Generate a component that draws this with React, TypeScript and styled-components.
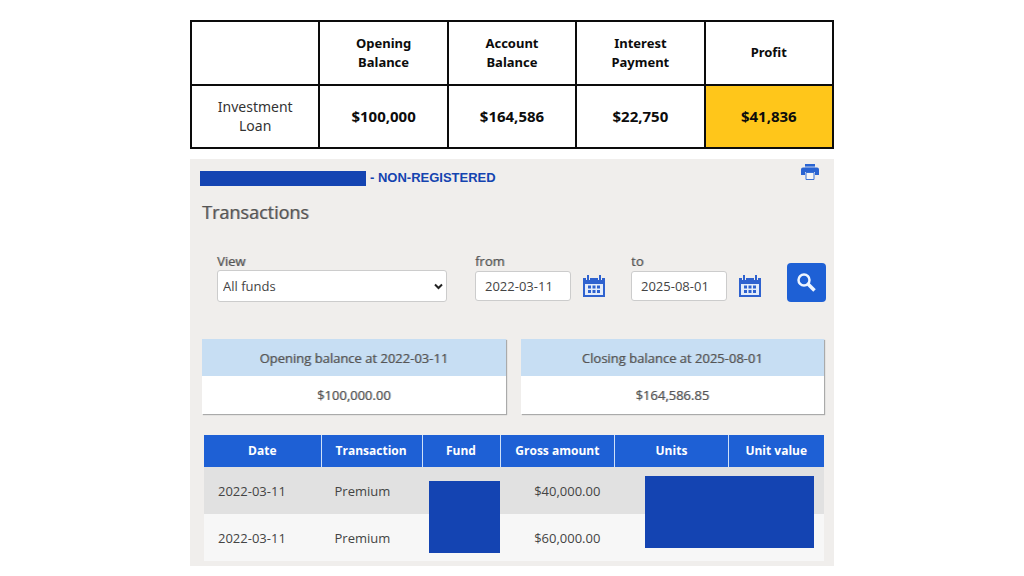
import React from 'react';
import styled, { createGlobalStyle, css } from 'styled-components';

const GlobalStyle = createGlobalStyle`
  *, *::before, *::after { box-sizing: border-box; }
  body { margin: 0; background: #fff; }
`;

/* Open Sans has no medium weight here, so regular text is thickened slightly. */
const mediumText = css`
  font-weight: 400;
  text-shadow: 1px 0 rgba(85, 85, 85, 0.45);
`;

const Page = styled.main`
  padding: 20px 190px 10px;
  font-family: 'Open Sans', 'Noto Sans', sans-serif;
  font-size: 13px;
  line-height: 18px;
  color: #555;
`;

const SummaryTable = styled.table`
  width: 100%;
  table-layout: fixed;
  border-collapse: collapse;
  margin-bottom: 10px;
  font-family: 'Noto Sans', sans-serif;
  font-size: 13px;
  line-height: 19px;
  color: #0c0c0c;
  text-align: center;

  th, td {
    height: 64px;
    padding: 0 24px 1px;
    border: 2px solid #0c0c0c;
  }
  tbody th, tbody td { height: 63px; }
  thead th { font-weight: 700; }
  tbody th { font-weight: 400; color: #333; font-size: 14px; }
`;

const SummaryValue = styled.td<{ $highlight?: boolean }>`
  font-weight: 700;
  font-size: 15px;
  background: ${(p) => (p.$highlight ? '#ffc61a' : 'transparent')};
`;

const Panel = styled.section`
  padding: 4px 10px 5px;
  background: #f0eeec;
`;

const PanelHeader = styled.header`
  display: flex;
  justify-content: space-between;
  align-items: flex-start;
  height: 32px;
`;

const Account = styled.p`
  display: flex;
  align-items: center;
  gap: 4px;
  margin: 0;
  height: 30px;
  font: 700 13px/18px 'Liberation Sans', Arial, sans-serif;
  color: #1444b0;
`;

const AccountMask = styled.span`
  width: 166px;
  height: 15px;
  background: #1444b2;
`;

const IconButton = styled.button`
  display: flex;
  align-items: center;
  justify-content: center;
  padding: 0;
  border: 0;
  background: none;
  cursor: pointer;
`;

const PrintButton = styled(IconButton)`
  width: 20px;
  height: 18px;
  margin-right: 4px;
`;

const Title = styled.h1`
  margin: 4px 0 0 2px;
  font-size: 18px;
  line-height: 26px;
  ${mediumText}
`;

const Filters = styled.form`
  display: flex;
  align-items: flex-end;
  margin: 27px 0 37px;
  padding-left: 17px;
`;

const Field = styled.div<{ $grow?: boolean }>`
  display: flex;
  flex-direction: column;
  flex: ${(p) => (p.$grow ? '1 1 0' : '0 0 auto')};
  min-width: 0;
  margin-right: ${(p) => (p.$grow ? 28 : 0)}px;
`;

const Label = styled.label`
  line-height: 18px;
  ${mediumText}
`;

const SelectWrap = styled.div`
  display: grid;
  align-items: center;

  > * { grid-area: 1 / 1; }
  > svg {
    justify-self: end;
    margin-right: 4px;
    pointer-events: none;
  }
`;

const Select = styled.select`
  appearance: none;
  width: 100%;
  height: 32px;
  padding: 0 24px 0 5px;
  border: 1px solid #ccc;
  border-radius: 3px;
  background: #fff;
  font: inherit;
  color: #444;
`;

const DateRow = styled.div`
  display: flex;
  align-items: center;
  height: 32px;
`;

const DateInput = styled.input`
  width: 96px;
  height: 30px;
  padding: 0 9px;
  border: 1px solid #ccc;
  border-radius: 3px;
  background: #fff;
  font: inherit;
  color: #444;
`;

const CalendarButton = styled(IconButton)`
  width: 24px;
  height: 24px;
  margin: 0 25px 0 11px;
`;

const SearchButton = styled(IconButton)`
  width: 39px;
  height: 39px;
  margin-right: -2px;
  border-radius: 4px;
  background: #1e60d5;
`;

const Cards = styled.div`
  display: grid;
  grid-template-columns: 1fr 1fr;
  gap: 15px;
  margin: 0 0 21px 2px;
`;

const Card = styled.article`
  background: #fff;
  box-shadow: 1px 1px 1px #aaa;
  text-align: center;
`;

const CardTitle = styled.h2`
  margin: 0;
  padding: 10px 0 9px;
  background: #c7def3;
  font-size: 13px;
  line-height: 18px;
  ${mediumText}
`;

const CardValue = styled.p`
  margin: 0;
  padding: 10px 0;
  ${mediumText}
`;

const Transactions = styled.table`
  width: calc(100% - 4px);
  margin-left: 4px;
  table-layout: fixed;
  border-collapse: collapse;

  thead th {
    height: 32px;
    padding: 0;
    background: #1e60d5;
    color: #fff;
    font-size: 12px;
    font-weight: 700;
  }
  thead th + th { box-shadow: inset 1px 0 #cfe0f8; }
  tbody td { height: 47px; padding: 0 14px; color: #444; }
  tbody tr:nth-child(odd) { background: #e1e1e1; }
  tbody tr:nth-child(even) { background: #f7f7f7; }
`;

const AmountCell = styled.td`
  text-align: right;
`;

const MaskedCell = styled.td`
  position: relative;
`;

const Mask = styled.span<{ $top: number; $left: number; $right: number }>`
  position: absolute;
  top: ${(p) => p.$top}px;
  left: ${(p) => p.$left}px;
  right: ${(p) => p.$right}px;
  height: 72px;
  background: #1444b2;
`;

const Printer = () => (
  <svg width="18" height="16" viewBox="0 0 18 16" aria-hidden="true">
    <path fill="#2a64d2" d="M4 0h10v2.500H4zM2 3.500h14a2 2 0 0 1 2 2V11h-4V8H4v3H0V5.500a2 2 0 0 1 2-2z" />
    <path fill="#5f8bdd" d="M4 2.500h10v1H4z" />
    <path fill="#f6f6f6" stroke="#3b73d6" strokeWidth="1" d="M5 8.500h8v7H5z" />
  </svg>
);

const Calendar = () => (
  <svg width="22" height="22" viewBox="0 0 22 22" aria-hidden="true">
    <path fill="#2f62cf" d="M0 3h22v19H0z" />
    <path fill="#e4ecfa" d="M2 9h18v11H2z" />
    <path fill="#f0eeec" d="M3 0h4v5H3zM15 0h4v5h-4z" />
    <path fill="#2f62cf" d="M4 0h2v5H4zM16 0h2v5h-2z" />
    <path
      fill="#2f62cf"
      d="M5 10.500h3v3H5zM9.500 10.500h3v3h-3zM14 10.500h3v3h-3zM5 15h3v3H5zM9.500 15h3v3h-3zM14 15h3v3h-3z"
    />
  </svg>
);

const Search = () => (
  <svg width="19" height="19" viewBox="0 0 19 19" fill="none" stroke="#eef5ff" aria-hidden="true">
    <circle cx="7" cy="7" r="5.500" strokeWidth="2.500" />
    <path d="M11 11l6.500 6.500" strokeWidth="3.500" />
  </svg>
);

const Chevron = () => (
  <svg width="9" height="7" viewBox="0 0 9 7" fill="none" stroke="#222" strokeWidth="2" aria-hidden="true">
    <path d="M1 1.500l3.500 3.500L8 1.500" />
  </svg>
);

const columns = [
  { name: 'Date', width: '18.8%' },
  { name: 'Transaction', width: '16.3%' },
  { name: 'Fund', width: '12.7%' },
  { name: 'Gross amount', width: '18.4%' },
  { name: 'Units', width: '18.4%' },
  { name: 'Unit value', width: '15.4%' },
];

const transactions = [
  { date: '2022-03-11', type: 'Premium', amount: '$40,000.00' },
  { date: '2022-03-11', type: 'Premium', amount: '$60,000.00' },
];

export default function App() {
  return (
    <Page>
      <GlobalStyle />
      <SummaryTable>
        <thead>
          <tr>
            <td />
            <th scope="col">Opening Balance</th>
            <th scope="col">Account Balance</th>
            <th scope="col">Interest Payment</th>
            <th scope="col">Profit</th>
          </tr>
        </thead>
        <tbody>
          <tr>
            <th scope="row">Investment Loan</th>
            <SummaryValue>$100,000</SummaryValue>
            <SummaryValue>$164,586</SummaryValue>
            <SummaryValue>$22,750</SummaryValue>
            <SummaryValue $highlight>$41,836</SummaryValue>
          </tr>
        </tbody>
      </SummaryTable>

      <Panel>
        <PanelHeader>
          <Account>
            <AccountMask />- NON-REGISTERED
          </Account>
          <PrintButton type="button" aria-label="Print">
            <Printer />
          </PrintButton>
        </PanelHeader>
        <Title>Transactions</Title>

        <Filters onSubmit={(e) => e.preventDefault()}>
          <Field $grow>
            <Label htmlFor="view">View</Label>
            <SelectWrap>
              <Select id="view">
                <option>All funds</option>
              </Select>
              <Chevron />
            </SelectWrap>
          </Field>
          <Field>
            <Label htmlFor="from">from</Label>
            <DateRow>
              <DateInput id="from" type="text" defaultValue="2022-03-11" />
              <CalendarButton type="button" aria-label="Choose start date">
                <Calendar />
              </CalendarButton>
            </DateRow>
          </Field>
          <Field>
            <Label htmlFor="to">to</Label>
            <DateRow>
              <DateInput id="to" type="text" defaultValue="2025-08-01" />
              <CalendarButton type="button" aria-label="Choose end date">
                <Calendar />
              </CalendarButton>
            </DateRow>
          </Field>
          <SearchButton type="submit" aria-label="Search">
            <Search />
          </SearchButton>
        </Filters>

        <Cards>
          <Card>
            <CardTitle>Opening balance at 2022-03-11</CardTitle>
            <CardValue>$100,000.00</CardValue>
          </Card>
          <Card>
            <CardTitle>Closing balance at 2025-08-01</CardTitle>
            <CardValue>$164,586.85</CardValue>
          </Card>
        </Cards>

        <Transactions>
          <colgroup>
            {columns.map((c) => (
              <col key={c.name} style={{ width: c.width }} />
            ))}
          </colgroup>
          <thead>
            <tr>
              {columns.map((c) => (
                <th key={c.name} scope="col">{c.name}</th>
              ))}
            </tr>
          </thead>
          <tbody>
            {transactions.map((t, i) => (
              <tr key={i}>
                <td>{t.date}</td>
                <td>{t.type}</td>
                <MaskedCell>{i === 0 && <Mask $top={14} $left={7} $right={0} />}</MaskedCell>
                <AmountCell>{t.amount}</AmountCell>
                <MaskedCell colSpan={2}>
                  {i === 0 && <Mask $top={9} $left={31} $right={10} />}
                </MaskedCell>
              </tr>
            ))}
          </tbody>
        </Transactions>
      </Panel>
    </Page>
  );
}
